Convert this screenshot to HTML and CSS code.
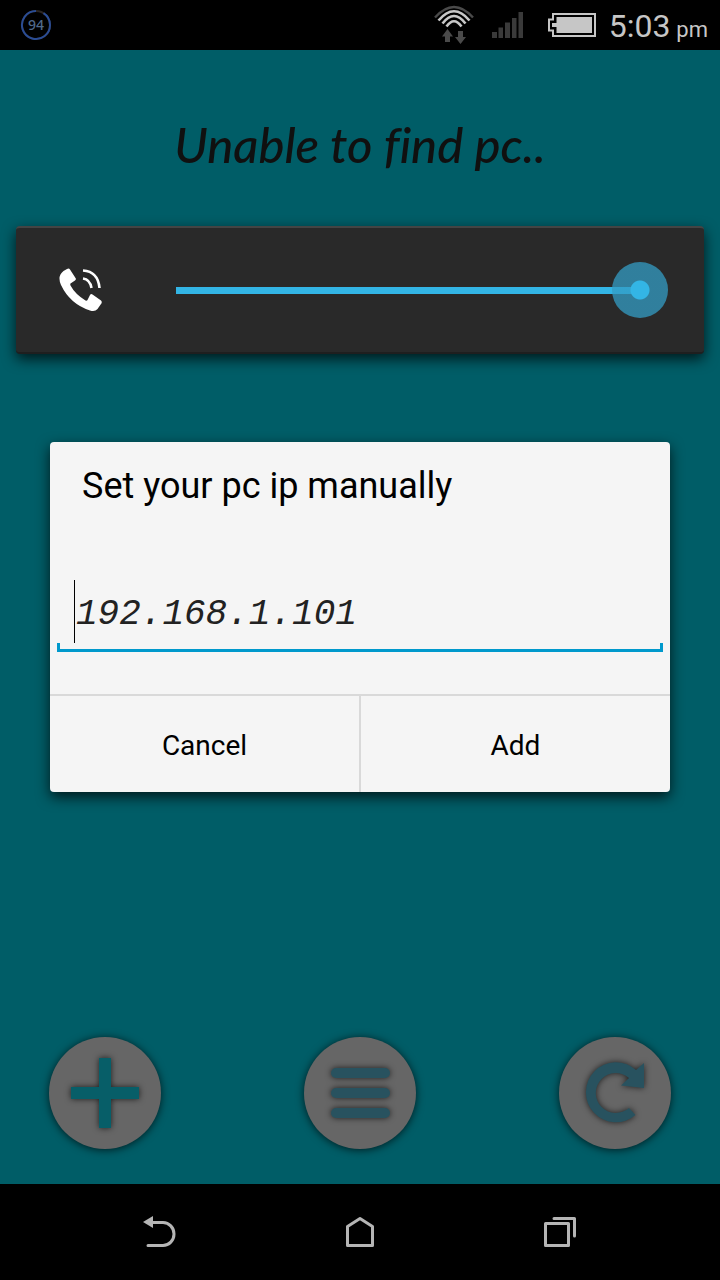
FILE: index.html
```html
<!DOCTYPE html>
<html lang="en">
<head>
<meta charset="utf-8">
<meta name="viewport" content="width=device-width, initial-scale=1">
<title>PC Remote</title>
<link rel="stylesheet" href="styles.css">
</head>
<body>
<header class="status">
  <svg class="battery-ring" width="32" height="32" viewBox="0 0 32 32" role="img" aria-label="94 percent">
    <circle cx="16" cy="16" r="14" fill="none" stroke="#2b2522" stroke-width="2"/>
    <path d="M23.5 4.2A14 14 0 1 1 16 2" fill="none" stroke="#2a4c94" stroke-width="2"/>
    <text class="ring-text" x="16" y="21" text-anchor="middle">94</text>
  </svg>
  <div class="status-icons">
    <svg class="wifi" width="40" height="40" viewBox="0 0 40 40" fill="none" aria-hidden="true">
      <path d="M1 12.500Q20-8.500 39 12.500" stroke="#4a4a4a" stroke-width="2.400"/>
      <path d="M4.500 15.500Q20-3 35.500 15.500" stroke="#c8c8c8" stroke-width="2.600"/>
      <path d="M8.500 18.500Q20 3.500 31.500 18.500M12.500 21.500Q20 11 27.500 21.500" stroke="#c8c8c8" stroke-width="2.600"/>
      <path d="M13.500 24L19 31.500H16V37H11V31.500H8ZM24 26H29V32H32L26.500 39L21 32H24Z" fill="#4a4a4a"/>
    </svg>
    <svg class="signal" width="32" height="26" viewBox="0 0 32 26" fill="#3a3a3a" aria-hidden="true">
      <path d="M0 20h5v6H0zM6.500 15.500h4.500V26H6.500zM13 10.500h5V26h-5zM20 6h4.500v20H20zM26.500 0H31v26h-4.500z"/>
    </svg>
    <svg class="battery" width="48" height="24" viewBox="0 0 48 24" aria-hidden="true">
      <path d="M5 1H47V23H5V17.500H1V6.500H5Z" fill="none" stroke="#c6c6c6" stroke-width="2"/>
      <path d="M8.500 4H44V20H8.500V14H4V10H8.500Z" fill="#c6c6c6"/>
    </svg>
    <div class="clock">5:03 <span class="clock-period">pm</span></div>
  </div>
</header>

<main class="screen">
  <h1 class="headline">Unable to find pc..</h1>

  <section class="volume">
    <svg class="phone" width="44" height="44" viewBox="0 0 44 44" aria-hidden="true">
      <path d="M4.500 3L8 1Q10 0 11 1.500L16.500 10Q17.500 11.500 16 12.500L11.500 15.500Q11 16 11.500 17.500Q16 26 26.500 32.500Q28 33 28.500 32L31 27Q32 25.500 33.500 26.500L42 32.500Q43.500 34 42 36L38.500 41Q36 44 31 42.500Q11 36 2 17Q-2 8 4.500 3Z" fill="#fff"/>
      <path d="M24 10.500Q31 11.500 32.500 20M24 2.500Q39 3.500 40.500 20" fill="none" stroke="#fff" stroke-width="2.600"/>
    </svg>
    <input class="slider" type="range" min="0" max="100" value="100" aria-label="Call volume">
  </section>

  <form class="dialog" role="dialog" aria-labelledby="dialog-title">
    <label class="dialog-title" id="dialog-title" for="ip">Set your pc ip manually</label>
    <div class="field">
      <input class="field-input" id="ip" type="text" value="192.168.1.101">
    </div>
    <div class="dialog-actions">
      <button class="dialog-button" type="button">Cancel</button>
      <button class="dialog-button" type="button">Add</button>
    </div>
  </form>

  <div class="actions">
    <button class="round" type="button" aria-label="Add">
      <svg class="round-icon" width="112" height="112" viewBox="0 0 112 112" aria-hidden="true">
        <path d="M50 21H62V50H90V62H62V91H50V62H22V50H50Z" fill="#075e68"/>
      </svg>
    </button>
    <button class="round" type="button" aria-label="Menu">
      <svg class="round-icon" width="112" height="112" viewBox="0 0 112 112" fill="#28525f" aria-hidden="true">
        <rect x="27" y="31" width="59" height="10" rx="5"/>
        <rect x="27" y="51" width="59" height="10" rx="5"/>
        <rect x="27" y="71" width="59" height="10" rx="5"/>
      </svg>
    </button>
    <button class="round" type="button" aria-label="Refresh">
      <svg class="round-icon" width="112" height="112" viewBox="0 0 112 112" aria-hidden="true">
        <path d="M77 33L85 26V51L62 48.500L70 41A20 20 0 1 0 70 71L76.500 78A30 30 0 1 1 77 33Z" fill="#28525f"/>
      </svg>
    </button>
  </div>
</main>

<nav class="navbar">
  <button class="nav-button" type="button" aria-label="Back">
    <svg width="36" height="34" viewBox="0 0 36 34" fill="none" aria-hidden="true">
      <path d="M10 8.500H21A11 11.500 0 0 1 21 31.500H6" stroke="#b5b5b5" stroke-width="3" stroke-linecap="round"/>
      <path d="M1 8L11 2V14Z" fill="#b5b5b5"/>
    </svg>
  </button>
  <button class="nav-button" type="button" aria-label="Home">
    <svg width="36" height="34" viewBox="0 0 36 34" fill="none" aria-hidden="true">
      <path d="M5.500 31.500V12.500L18 4.500L30.500 12.500V31.500Z" stroke="#b5b5b5" stroke-width="3" stroke-linejoin="round"/>
    </svg>
  </button>
  <button class="nav-button" type="button" aria-label="Recent apps">
    <svg width="36" height="34" viewBox="0 0 36 34" fill="none" aria-hidden="true">
      <path d="M5.500 9.500H28.500V31.500H5.500ZM14 4.500H34.500V22" stroke="#b5b5b5" stroke-width="3" stroke-linecap="round" stroke-linejoin="round" transform="translate(-2 0)"/>
    </svg>
  </button>
</nav>
</body>
</html>
```
FILE: styles.css
```css
*,
*::before,
*::after {
  box-sizing: border-box;
}

body {
  margin: 0;
  min-height: 100vh;
  display: flex;
  flex-direction: column;
  background: #005d67;
  color: #000;
  font-family: Roboto, "Open Sans", sans-serif;
}

button {
  margin: 0;
  padding: 0;
  border: 0;
  background: none;
  color: inherit;
  font: inherit;
}

svg {
  display: block;
}

.status {
  display: flex;
  justify-content: space-between;
  align-items: center;
  height: 50px;
  padding: 0 12px 0 20px;
  background: #000;
}

.ring-text {
  fill: #506a8c;
  font: 500 14px "Noto Sans", sans-serif;
}

.status-icons {
  display: flex;
  align-items: center;
}

.signal {
  margin: 0 24px 0 18px;
}

.clock {
  margin-left: 13px;
  padding-top: 6px;
  color: #c6c6c6;
  font-size: 32px;
  line-height: 40px;
}

.clock-period {
  margin-left: -2px;
  font-size: 22px;
}

.screen {
  flex: 1;
  display: flex;
  flex-direction: column;
  padding: 0 16px 35px;
}

.headline {
  margin: 66px 0 54px;
  color: #101010;
  font: italic 500 49px/56px Lato, sans-serif;
  font-variant-ligatures: none;
  text-align: center;
}

.volume {
  display: flex;
  align-items: center;
  gap: 45px;
  height: 128px;
  padding: 0 36px 0 43px;
  border-top: 2px solid #444;
  border-bottom: 2px solid #1f1f1f;
  border-radius: 4px;
  background: #292929;
  box-shadow: 0 5px 14px rgba(0, 0, 0, 0.75);
}

.slider {
  appearance: none;
  flex: 1;
  min-width: 0;
  height: 58px;
  margin: 0;
  background: linear-gradient(#33b5e5, #33b5e5) 28px center / calc(100% - 56px) 7px no-repeat;
}

.slider::-webkit-slider-thumb {
  appearance: none;
  width: 56px;
  height: 56px;
  border-radius: 50%;
  background: radial-gradient(circle, #33b5e5 9px, rgba(51, 156, 196, 0.75) 10px);
}

.dialog {
  display: flex;
  flex-direction: column;
  margin: 88px 34px 0;
  border-radius: 4px;
  background: #f5f5f5;
  box-shadow: 0 5px 14px rgba(0, 0, 0, 0.75);
}

.dialog-title {
  padding: 22px 32px 0;
  font-size: 36px;
  line-height: 44px;
}

.field {
  position: relative;
  margin: 72px 7px 42px;
  padding: 0 17px 9px;
}

.field::before {
  content: "";
  position: absolute;
  top: 0;
  left: 17px;
  width: 1px;
  height: 63px;
  background: #000;
}

.field::after {
  content: "";
  position: absolute;
  right: 0;
  bottom: 0;
  left: 0;
  height: 9px;
  border: 3px solid #0099cc;
  border-top: 0;
}

.field-input {
  display: block;
  width: 100%;
  height: 63px;
  padding: 6px 0 0 2px;
  border: 0;
  outline: 0;
  background: none;
  color: #222;
  font: italic 36px "Liberation Mono", monospace;
}

.dialog-actions {
  display: flex;
  border-top: 2px solid #d9d9d9;
}

.dialog-button {
  flex: 1;
  height: 96px;
  padding-top: 2px;
  font-size: 28px;
}

.dialog-button + .dialog-button {
  border-left: 2px solid #d9d9d9;
}

.actions {
  display: flex;
  justify-content: space-between;
  margin-top: auto;
  padding: 0 33px;
}

.round {
  width: 112px;
  height: 112px;
  border-radius: 50%;
  background: #666;
  box-shadow: 0 1px 8px rgba(0, 0, 0, 0.7);
}

.round-icon {
  filter: drop-shadow(0 0 3px rgba(0, 0, 0, 0.7));
}

.navbar {
  display: flex;
  justify-content: center;
  gap: 164px;
  height: 96px;
  padding-bottom: 2px;
  background: #000;
}
```
